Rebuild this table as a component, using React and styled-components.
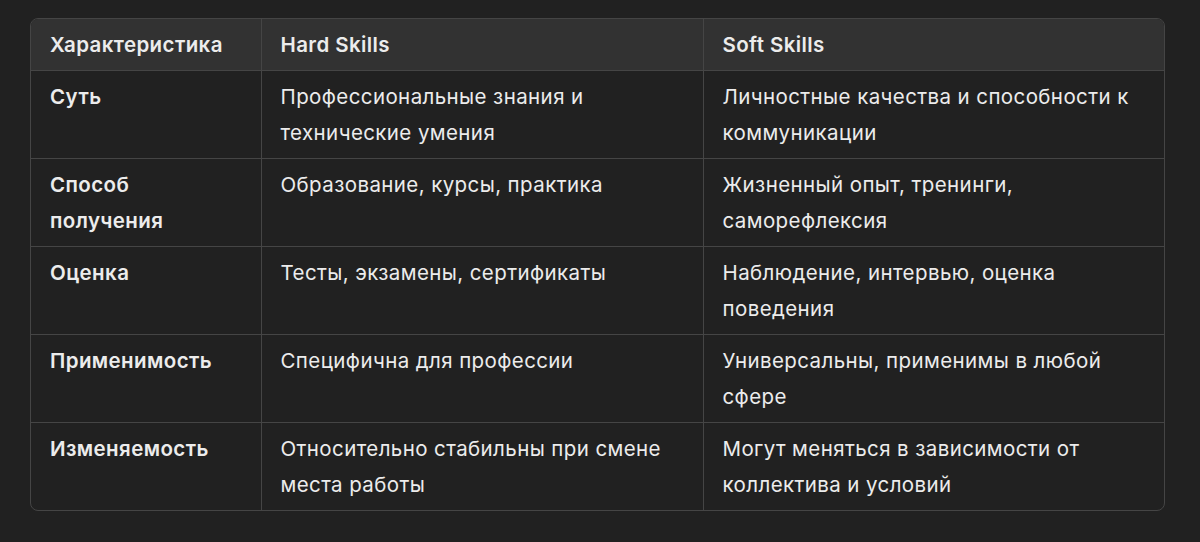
import React from 'react';
import styled, { createGlobalStyle } from 'styled-components';

const rows = [
  ['Суть', 'Профессиональные знания и технические умения', 'Личностные качества и способности к коммуникации'],
  ['Способ получения', 'Образование, курсы, практика', 'Жизненный опыт, тренинги, саморефлексия'],
  ['Оценка', 'Тесты, экзамены, сертификаты', 'Наблюдение, интервью, оценка поведения'],
  ['Применимость', 'Специфична для профессии', 'Универсальны, применимы в любой сфере'],
  ['Изменяемость', 'Относительно стабильны при смене места работы', 'Могут меняться в зависимости от коллектива и условий'],
];

const App = () => (
  <>
    <GlobalStyle />
    <Page>
      <Frame>
        <Table>
          <colgroup>
            <col style={{ width: 230 }} />
            <col style={{ width: 442 }} />
            <col />
          </colgroup>
          <thead>
            <tr>
              <Head>Характеристика</Head>
              <Head>Hard Skills</Head>
              <Head>Soft Skills</Head>
            </tr>
          </thead>
          <tbody>
            {rows.map(([name, hard, soft], i) => (
              <Row key={name} last={i === rows.length - 1}>
                <Cell bold>{name}</Cell>
                <Cell>{hard}</Cell>
                <Cell>{soft}</Cell>
              </Row>
            ))}
          </tbody>
        </Table>
      </Frame>
    </Page>
  </>
);

export default App;

const GlobalStyle = createGlobalStyle`
  html, body {
    margin: 0;
    background: #212121;
  }
  body {
    font-family: Inter, "Noto Sans", sans-serif;
    color: #ececec;
  }
`;

const Page = styled.div`
  padding: 18px 35px 0 30px;
`;

const Frame = styled.div`
  border: 1px solid #454545;
  border-radius: 8px;
  overflow: hidden;
  width: 1133px;
`;

const Table = styled.table`
  width: 100%;
  border-collapse: collapse;
  table-layout: fixed;
`;

const Head = styled.th`
  background: #323232;
  text-align: left;
  font-weight: 600;
  font-size: 20.5px;
  letter-spacing: 0.4px;
  line-height: 35px;
  padding: 8px 19px;
  border-bottom: 1px solid #454545;
  & + & {
    border-left: 1px solid #454545;
  }
`;

const Row = styled.tr`
  & > td {
    border-bottom: ${props => (props.last ? 'none' : '1px solid #454545')};
  }
`;

const Cell = styled.td`
  vertical-align: top;
  font-size: 20.5px;
  letter-spacing: 0.4px;
  font-weight: ${props => (props.bold ? 600 : 400)};
  line-height: 36px;
  padding: 8px 19px 7px;
  & + & {
    border-left: 1px solid #454545;
  }
`;
